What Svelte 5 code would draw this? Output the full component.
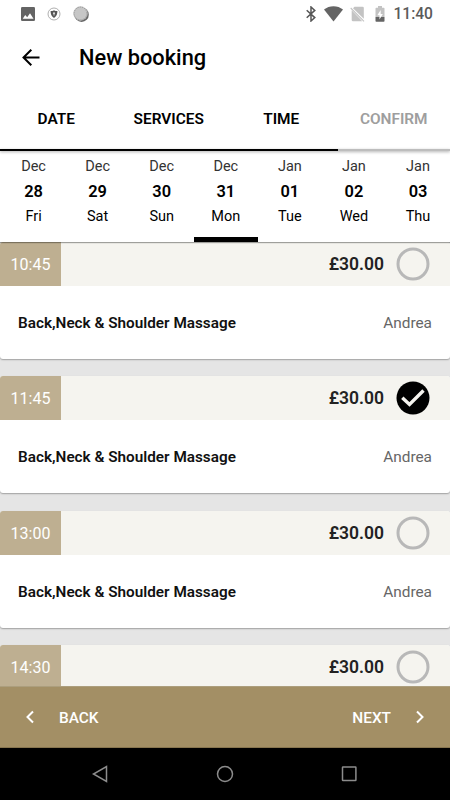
<script lang="ts">
  type Step = { label: string; done: boolean };
  type Day = { month: string; date: string; weekday: string };
  type Slot = { time: string; price: string; service?: string; staff?: string };

  const steps: Step[] = [
    { label: "DATE", done: true },
    { label: "SERVICES", done: true },
    { label: "TIME", done: true },
    { label: "CONFIRM", done: false },
  ];

  const days: Day[] = [
    { month: "Dec", date: "28", weekday: "Fri" },
    { month: "Dec", date: "29", weekday: "Sat" },
    { month: "Dec", date: "30", weekday: "Sun" },
    { month: "Dec", date: "31", weekday: "Mon" },
    { month: "Jan", date: "01", weekday: "Tue" },
    { month: "Jan", date: "02", weekday: "Wed" },
    { month: "Jan", date: "03", weekday: "Thu" },
  ];

  const slots: Slot[] = [
    { time: "10:45", price: "£30.00", service: "Back,Neck & Shoulder Massage", staff: "Andrea" },
    { time: "11:45", price: "£30.00", service: "Back,Neck & Shoulder Massage", staff: "Andrea" },
    { time: "13:00", price: "£30.00", service: "Back,Neck & Shoulder Massage", staff: "Andrea" },
    { time: "14:30", price: "£30.00" },
  ];

  let selectedDay = $state("31");
  let selectedTime = $state("11:45");

  let progress = $derived((steps.filter((s) => s.done).length / steps.length) * 100);
</script>

<div class="screen">
  <div class="status">
    <div class="status-left">
      <svg width="14" height="14" viewBox="0 0 14 14">
        <rect width="14" height="14" rx="1.3" fill="#646464" />
        <path d="M1.7 11.7 4.2 8l2 2.2L9 6.2l3.5 5.5z" fill="#fff" />
      </svg>
      <svg class="shield" width="14" height="14" viewBox="0 0 14 14">
        <circle cx="7" cy="7" r="6" fill="#fff" stroke="#9b9b9b" stroke-width=".8" />
        <path d="M7 3.2c1.2.7 2.3.8 3.4.8 0 3-.7 5.2-3.4 6.9C4.3 9.2 3.6 7 3.6 4 4.7 4 5.8 3.9 7 3.2z" fill="#555" />
        <path d="M7 5.2a1 1 0 0 1 .5 1.9v1.3h-1V7.1A1 1 0 0 1 7 5.2z" fill="#ddd" />
      </svg>
      <svg class="dial" width="16" height="16" viewBox="0 0 16 16">
        <circle cx="8.6" cy="8.7" r="7.2" fill="#666" />
        <circle cx="7.5" cy="7.5" r="7.2" fill="#c6c6c6" />
        <circle cx="7.5" cy="7.5" r="6.4" fill="none" stroke="#8c8c8c" stroke-width="1" stroke-dasharray="1 1.2" />
      </svg>
    </div>
    <div class="status-right">
      <svg width="10" height="16" viewBox="0 0 10 16">
        <path d="M.7 4.2 8.8 11.6 5 15V1l3.8 3.4L.7 11.8" fill="none" stroke="#555" stroke-width="1.5" />
      </svg>
      <svg class="wifi" width="19" height="16" viewBox="0 0 19 16">
        <path d="M0 3.6C5.3-.9 13.7-.9 19 3.600L9.500 15.600z" fill="#646464" />
      </svg>
      <svg class="sim" width="15" height="16" viewBox="0 0 15 16">
        <path d="M4.500.7h8q1.300 0 1.300 1.300v10.700L3 2.200z" fill="#c3c3c3" />
        <path d="M1.700 4.300 12.300 15.300H3q-1.300 0-1.300-1.300z" fill="#c3c3c3" />
        <path d="M.7 2 14 15.300" stroke="#c3c3c3" stroke-width="1.100" />
      </svg>
      <svg class="battery" width="10" height="16" viewBox="0 0 10 16">
        <path d="M3 0h4v1.800h1.700q.8 0 .8.800V11H.5V2.600q0-.8.8-.8H3z" fill="#c3c3c3" />
        <path d="M.5 11h9v4q0 .8-.8.8H1.300q-.8 0-.8-.8z" fill="#646464" />
        <path d="M5.700 4 2.300 9.300h2.200v4.200L7.800 8H5.700z" fill="#fff" />
      </svg>
      <span class="clock">11:40</span>
    </div>
  </div>

  <header class="app-bar">
    <button class="back-arrow" aria-label="Go back">
      <svg width="18" height="18" viewBox="0 0 18 18" fill="none" stroke="#000" stroke-width="2">
        <path d="M17.5 8.500H1.500M9.300 .7 1.500 8.500l7.800 7.800" />
      </svg>
    </button>
    <h1>New booking</h1>
  </header>

  <nav class="steps">
    {#each steps as step (step.label)}
      <span class="step" class:pending={!step.done}>{step.label}</span>
    {/each}
  </nav>
  <div class="progress"><div class="bar" style="width:{progress}%"></div></div>

  <div class="days">
    {#each days as day (day.date)}
      <button class="day" class:active={day.date === selectedDay} onclick={() => (selectedDay = day.date)}>
        <span class="month">{day.month}</span>
        <span class="date">{day.date}</span>
        <span class="weekday">{day.weekday}</span>
      </button>
    {/each}
  </div>

  <main class="slots">
    {#each slots as slot (slot.time)}
      <article class="slot">
        <div class="slot-head">
          <span class="time">{slot.time}</span>
          <span class="price">{slot.price}</span>
          <button class="pick" aria-label="Select {slot.time}" onclick={() => (selectedTime = slot.time)}>
            <svg width="34" height="34" viewBox="0 0 34 34" fill="none">
              {#if slot.time === selectedTime}
                <circle cx="17" cy="17" r="16.5" fill="#000" />
                <path d="M6.300 16.700l7.200 6.800L27.500 9.500" stroke="#f5f4ef" stroke-width="3.400" />
              {:else}
                <circle cx="17" cy="17" r="15" stroke="#b8b8b8" stroke-width="3" />
              {/if}
            </svg>
          </button>
        </div>
        {#if slot.service}
          <div class="slot-body">
            <span class="service">{slot.service}</span>
            <span class="staff">{slot.staff}</span>
          </div>
        {/if}
      </article>
    {/each}
  </main>

  <footer class="actions">
    <button class="action">
      <svg width="8" height="14" viewBox="0 0 8 14" fill="none" stroke="#fff" stroke-width="2">
        <path d="M7 1.5 1.5 7 7 12.5" />
      </svg>
      <span>BACK</span>
    </button>
    <button class="action">
      <span>NEXT</span>
      <svg width="8" height="14" viewBox="0 0 8 14" fill="none" stroke="#fff" stroke-width="2">
        <path d="M1 1.5 6.5 7 1 12.5" />
      </svg>
    </button>
  </footer>

  <div class="system-nav">
    <svg width="18" height="18" viewBox="0 0 18 18"><path d="M15.5 1.5v15L2.5 9z" /></svg>
    <svg width="18" height="18" viewBox="0 0 18 18"><circle cx="9" cy="9" r="7.5" /></svg>
    <svg width="18" height="18" viewBox="0 0 18 18"><rect x="1.5" y="2" width="13.4" height="13.4" rx=".5" /></svg>
  </div>
</div>

<style>
  :global(body) { margin: 0; }

  .screen {
    width: 450px;
    height: 800px;
    display: flex;
    flex-direction: column;
    overflow: hidden;
    background: #fff;
    color: #000;
    font-family: Roboto, "Liberation Sans", sans-serif;
  }
  .screen > * { flex-shrink: 0; box-sizing: border-box; }
  svg { display: block; flex-shrink: 0; }
  button {
    font: inherit;
    color: inherit;
    background: none;
    border: none;
    padding: 0;
    cursor: pointer;
  }

  /* status bar */
  .status {
    height: 27px;
    padding: 0 17px 0 21px;
    display: flex;
    align-items: center;
    justify-content: space-between;
  }
  .status-left, .status-right { display: flex; align-items: center; }
  .shield { margin-left: 12px; }
  .dial { margin-left: 12px; }
  .wifi { margin-left: 8px; }
  .sim { margin-left: 7px; }
  .battery { margin-left: 10px; }
  .clock {
    margin-left: 8px;
    padding-top: 1px;
    font-size: 15.6px;
    font-weight: 500;
    line-height: 26px;
    color: #5a5a5a;
  }

  /* app bar */
  .app-bar {
    height: 61px;
    display: flex;
    align-items: center;
    padding-left: 22px;
  }
  .app-bar h1 {
    margin: 0 0 0 39px;
    font-size: 21.8px;
    font-weight: 500;
    line-height: 26px;
  }

  /* booking steps */
  .steps { height: 61px; display: flex; align-items: center; }
  .step {
    flex: 1;
    text-align: center;
    font-size: 15.4px;
    font-weight: 600;
  }
  .step.pending { color: #9e9e9e; }
  .progress {
    height: 2px;
    background: #bdbdbd;
    box-shadow: 0 1px 3px rgba(0, 0, 0, 0.35);
    position: relative;
    z-index: 2;
  }
  .bar { height: 100%; background: #000; }

  /* day picker */
  .days {
    height: 91px;
    padding-left: 1.5px;
    display: flex;
    background: #fff;
    box-shadow: 0 1px 1px rgba(0, 0, 0, 0.35);
    position: relative;
    z-index: 1;
  }
  .day {
    flex: 1;
    box-sizing: border-box;
    padding-top: 3px;
    display: flex;
    flex-direction: column;
    align-items: center;
    line-height: 25px;
    border-bottom: 5px solid transparent;
  }
  .day.active { border-bottom-color: #000; }
  .month { font-size: 14.5px; color: #333; }
  .date { font-size: 16.4px; font-weight: 600; }
  .weekday { font-size: 14.5px; }

  /* time slots */
  .slots {
    height: 444px;
    overflow: hidden;
    background: #e5e5e5;
  }
  .slot {
    height: 116.8px;
    margin-bottom: 17.6px;
    background: #fff;
    border-radius: 3px;
    overflow: hidden;
    box-shadow: 0 1px 1.5px rgba(0, 0, 0, 0.3);
  }
  .slot-head {
    height: 44px;
    padding-right: 20px;
    display: flex;
    align-items: center;
    background: #f5f4ef;
  }
  .time {
    width: 61px;
    padding-top: 1px;
    line-height: 43px;
    text-align: center;
    font-size: 16px;
    color: #fff;
    background: #beaf91;
  }
  .price {
    margin-left: auto;
    margin-right: 12px;
    font-size: 17.5px;
    font-weight: 600;
    color: #222;
  }
  .slot-body {
    height: 74px;
    padding: 0 18px;
    display: flex;
    align-items: center;
    justify-content: space-between;
    font-size: 15.4px;
  }
  .service { font-size: 15.3px; font-weight: 600; color: #111; }
  .staff { color: #666; }

  /* footer actions */
  .actions {
    height: 62px;
    padding: 0 26px;
    display: flex;
    align-items: center;
    justify-content: space-between;
    background: #a38f65;
    border-top: 1px solid #ac9e7d;
    border-bottom: 1px solid #87754f;
  }
  .action {
    display: flex;
    align-items: center;
    gap: 25px;
    font-size: 15.4px;
    font-weight: 500;
    color: #fff;
  }
  .action span { padding-top: 1px; }

  .system-nav {
    height: 52px;
    padding: 0 91px;
    display: flex;
    align-items: center;
    justify-content: space-between;
    background: #000;
  }
  .system-nav svg { fill: none; stroke: #8c8c8c; stroke-width: 1.5; }
</style>
